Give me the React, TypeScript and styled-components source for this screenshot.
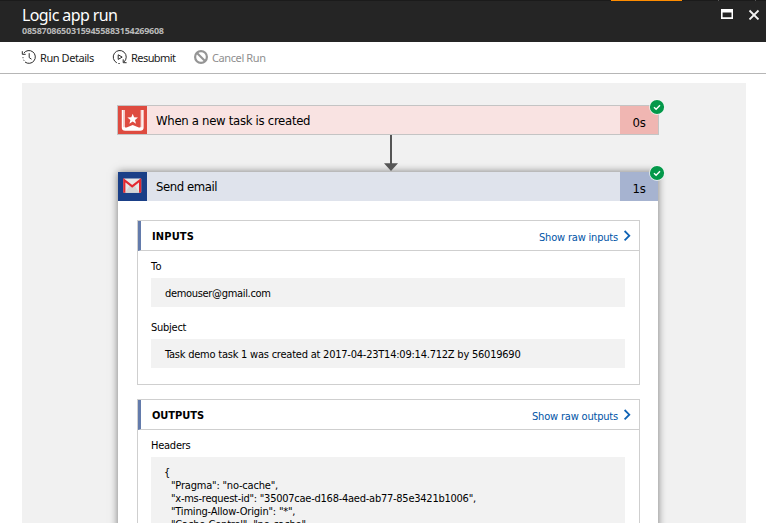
import React from 'react';
import styled, { createGlobalStyle } from 'styled-components';

const GlobalStyle = createGlobalStyle`
  * { box-sizing: border-box; }
  html, body { margin: 0; padding: 0; overflow: hidden; background: #fff; }
`;

const Blade = styled.div`
  display: flex;
  flex-direction: column;
  width: 766px;
  height: 523px;
  overflow: hidden;
  background: #fff;
  color: #000;
  font-family: 'DejaVu Sans Condensed', 'DejaVu Sans', sans-serif;
`;

const TopStrip = styled.div`
  display: flex;
  flex: none;
  height: 1px;
  background: #1b1b1b;
`;

const StripMark = styled.i<{ $gap: number; $width: number; $color: string }>`
  margin-left: ${(p) => p.$gap}px;
  width: ${(p) => p.$width}px;
  background: ${(p) => p.$color};
`;

const TitleBar = styled.header`
  display: flex;
  justify-content: space-between;
  flex: none;
  height: 41px;
  padding: 0 6px 0 22px;
  background: #252525;
  font-family: 'Noto Sans', sans-serif;
`;

const Titles = styled.div`
  display: flex;
  flex-direction: column;
  padding-top: 3px;
`;

const Title = styled.h1`
  margin: 0;
  color: #fff;
  font-size: 16px;
  font-weight: 400;
  line-height: 22px;
  letter-spacing: -0.6px;
  white-space: nowrap;
`;

const RunId = styled.span`
  color: #b9b9b9;
  font-size: 9px;
  font-weight: 700;
  line-height: 10px;
  letter-spacing: -0.26px;
`;

const WindowButtons = styled.div`
  display: flex;
  gap: 15px;
  padding-top: 7px;
`;

const Commands = styled.nav`
  display: flex;
  flex: none;
  align-items: flex-start;
  height: 32px;
  padding: 7px 0 0 21px;
  border-bottom: 1px solid #b6b6b6;
  font-family: 'Noto Sans', sans-serif;
`;

const Command = styled.button<{ $width: number; $tracking: number; $disabled?: boolean }>`
  display: flex;
  gap: 3px;
  width: ${(p) => p.$width}px;
  margin: 0;
  padding: 0;
  border: 0;
  background: none;
  color: ${(p) => (p.$disabled ? '#8f8f8f' : '#1c1c1c')};
  font: inherit;
  font-size: 11px;
  line-height: 18px;
  letter-spacing: ${(p) => p.$tracking}px;
  text-align: left;
  white-space: nowrap;
  svg { flex: none; }
`;

const Canvas = styled.main`
  display: flex;
  flex-direction: column;
  flex: 1;
  min-height: 0;
  margin: 9px 20px 0 22px;
  padding: 22px 87px 0 95px;
  background: #f1f1f1;
`;

const TriggerCard = styled.section`
  flex: none;
  width: 542px;
  border: 1px solid #c4c4c4;
`;

const ActionCard = styled.section`
  flex: none;
  width: 540px;
  height: 400px;
  margin-left: 1px;
  background: #fff;
  box-shadow: 0 0 8px rgba(0, 0, 0, 0.5);
`;

const CardHeader = styled.div<{ $bg: string; $height: number }>`
  position: relative;
  display: flex;
  height: ${(p) => p.$height}px;
  background: ${(p) => p.$bg};
`;

const CardIcon = styled.div<{ $bg: string }>`
  width: 29px;
  background: ${(p) => p.$bg};
  svg { display: block; }
`;

const CardTitle = styled.div<{ $tracking: number }>`
  flex: 1;
  padding-left: 9px;
  font-size: 13px;
  line-height: 30px;
  letter-spacing: ${(p) => p.$tracking}px;
`;

const Duration = styled.div<{ $bg: string }>`
  width: 38px;
  background: ${(p) => p.$bg};
  font-size: 13px;
  line-height: 34px;
  letter-spacing: -0.2px;
  text-align: center;
`;

const StatusBadge = styled.svg`
  position: absolute;
  right: -7px;
  top: -7px;
`;

const Connector = styled.svg`
  display: block;
  flex: none;
  position: relative;
  z-index: 1;
  margin-left: 266px;
`;

const CardBody = styled.div`
  display: flex;
  flex-direction: column;
  gap: 14px;
  padding: 19px 18px 0 19px;
`;

const Panel = styled.section<{ $height: number }>`
  height: ${(p) => p.$height}px;
  border: 1px solid #cfcfcf;
`;

const PanelHeader = styled.div`
  display: flex;
  justify-content: space-between;
  height: 30px;
  padding: 0 8px 0 11px;
  border-bottom: 1px solid #cfcfcf;
  border-left: 3px solid #637bab;
`;

const PanelTitle = styled.h2<{ $tracking: number }>`
  margin: 0;
  font-size: 11px;
  font-weight: 700;
  line-height: 32px;
  letter-spacing: ${(p) => p.$tracking}px;
`;

const RawLink = styled.a`
  display: flex;
  gap: 5px;
  color: #0054a6;
  font-size: 11px;
  line-height: 34px;
  letter-spacing: -0.19px;
  svg { margin-top: 9px; }
`;

const Fields = styled.div`
  display: flex;
  flex-direction: column;
  gap: 14px;
  padding: 9px 14px 0 13px;
`;

const Label = styled.div<{ $tracking?: number }>`
  height: 18px;
  font-size: 11px;
  line-height: 13px;
  letter-spacing: ${(p) => p.$tracking ?? -0.25}px;
`;

const Value = styled.div<{ $tracking: number }>`
  height: 29px;
  padding-left: 14px;
  background: #f2f2f2;
  font-size: 11px;
  line-height: 32px;
  letter-spacing: ${(p) => p.$tracking}px;
  white-space: nowrap;
`;

const Code = styled.pre`
  height: 140px;
  margin: 0;
  padding: 9px 0 0 13px;
  background: #f2f2f2;
  font-family: inherit;
  font-size: 11px;
  line-height: 13px;
`;

const CodeLine = styled.div<{ $indent?: boolean; $tracking?: number }>`
  height: 13px;
  padding-left: ${(p) => (p.$indent ? 7 : 0)}px;
  letter-spacing: ${(p) => p.$tracking ?? -0.2}px;
`;

const MaximizeIcon = () => (
  <svg width="13" height="12" viewBox="0 0 13 12">
    <path fill="#fff" fillRule="evenodd" d="M1 1h12v10H1zM2.6 4.6v4.7h8.9V4.6z" />
  </svg>
);

const CloseIcon = () => (
  <svg width="12" height="12" viewBox="0 0 12 12">
    <path d="M1.5 2.5l9 9M10.5 2.5l-9 9" stroke="#f4f4f4" strokeWidth="1.8" fill="none" />
  </svg>
);

const HistoryIcon = () => (
  <svg width="16" height="16" viewBox="0 0 16 16" fill="none" stroke="#2c2c2c" strokeWidth="1">
    <path d="M2.8 4.1A6.4 6.4 0 1 1 4 13" />
    <path d="M1.3 2.2v3.1h3.4M8.2 4.2v4.4l2.3 1.6" />
    <path d="M2 8.2v1M2.6 10.8l.5.9" />
  </svg>
);

const ResubmitIcon = () => (
  <svg width="16" height="16" viewBox="0 0 16 16" fill="none" stroke="#2c2c2c" strokeWidth="1">
    <path d="M4.8 13.8A6.5 6.5 0 1 1 11.9 13" />
    <path d="M14.6 13.7h-3.4v-3.4M6.2 5.8v4.6l4-2.3z" />
    <path d="M6.4 14.5h1.3" />
  </svg>
);

const CancelIcon = () => (
  <svg width="16" height="16" viewBox="0 0 16 16" fill="none" stroke="#959595" strokeWidth="2.2">
    <circle cx="8" cy="8" r="5.9" />
    <path d="M4 4l8 8" />
  </svg>
);

const WunderlistIcon = () => (
  <svg width="29" height="28" viewBox="0 0 29 28">
    <path
      fill="#fff"
      d="M3.8 4h2.9v16.3c0 1.2.8 1.6 1.9 1.1l6.1-2.3 6.1 2.3c1.1.5 1.9.1 1.9-1.1V4h2.9v17.7c0 2-1.2 3-3.3 3H7.1c-2.1 0-3.3-1-3.3-3z"
    />
    <path d="M5.6 4v17.2" stroke="#eda69f" strokeWidth=".6" />
    <path d="M23.8 4v17.2" stroke="#eda69f" strokeWidth=".6" />
    <path
      fill="#fff"
      d="M14.7 7.7l1.4 3.6 3.9.2-3 2.5 1 3.7-3.3-2.1-3.3 2.1 1-3.7-3-2.5 3.9-.2z"
    />
  </svg>
);

const GmailIcon = () => (
  <svg width="29" height="29" viewBox="0 0 29 29">
    <rect x="5.2" y="6.6" width="18" height="14.2" rx="1" fill="#e7e7e7" />
    <path d="M7 20.8l4.7-7 2.5 1.8 2.5-1.8 4.7 7z" fill="#d5d5d5" />
    <path d="M6.3 20.8V8.2l7.9 6.2 7.9-6.2v12.6" fill="none" stroke="#e32a31" strokeWidth="2.2" />
  </svg>
);

const SuccessBadge = () => (
  <StatusBadge width="16" height="16" viewBox="0 0 16 16">
    <circle cx="8" cy="8" r="7.8" fill="#f4faf6" />
    <circle cx="8" cy="8" r="7.1" fill="#04984a" />
    <path d="M5 8.3l2.1 2 3.9-4" fill="none" stroke="#fff" strokeWidth="1.4" />
  </StatusBadge>
);

const Chevron = () => (
  <svg width="8" height="12" viewBox="0 0 8 12">
    <path d="M1.6 1L6.3 5.7l-4.7 4.7" fill="none" stroke="#0f63b5" strokeWidth="1.8" />
  </svg>
);

const headerLines = [
  { text: '{' },
  { text: '"Pragma": "no-cache",', indent: true },
  { text: '"x-ms-request-id": "35007cae-d168-4aed-ab77-85e3421b1006",', indent: true, tracking: -0.25 },
  { text: '"Timing-Allow-Origin": "*",', indent: true },
  { text: '"Cache-Control": "no-cache",', indent: true },
];

export default function App() {
  return (
    <>
      <GlobalStyle />
      <Blade>
        <TopStrip>
          <StripMark $gap={611} $width={71} $color="#ff8c00" />
          <StripMark $gap={36} $width={1} $color="#555" />
          <StripMark $gap={36} $width={1} $color="#555" />
        </TopStrip>
        <TitleBar>
          <Titles>
            <Title>Logic app run</Title>
            <RunId>08587086503159455883154269608</RunId>
          </Titles>
          <WindowButtons>
            <MaximizeIcon />
            <CloseIcon />
          </WindowButtons>
        </TitleBar>
        <Commands>
          <Command $width={91} $tracking={-0.44}><HistoryIcon />Run Details</Command>
          <Command $width={81} $tracking={-0.56}><ResubmitIcon />Resubmit</Command>
          <Command $width={90} $tracking={-0.4} $disabled><CancelIcon />Cancel Run</Command>
        </Commands>
        <Canvas>
          <TriggerCard>
            <CardHeader $bg="#f9e3e2" $height={28}>
              <CardIcon $bg="#de4b40"><WunderlistIcon /></CardIcon>
              <CardTitle $tracking={-0.3}>When a new task is created</CardTitle>
              <Duration $bg="#f0b6b2">0s</Duration>
              <SuccessBadge />
            </CardHeader>
          </TriggerCard>
          <Connector width="16" height="37" viewBox="0 0 16 37">
            <path d="M7 0h2v28.3h6L8 36 1 28.3h6z" fill="#555" />
          </Connector>
          <ActionCard>
            <CardHeader $bg="#dfe3ec" $height={29}>
              <CardIcon $bg="#1a3f87"><GmailIcon /></CardIcon>
              <CardTitle $tracking={-0.44}>Send email</CardTitle>
              <Duration $bg="#a6b3d0">1s</Duration>
              <SuccessBadge />
            </CardHeader>
            <CardBody>
              <Panel $height={165}>
                <PanelHeader>
                  <PanelTitle $tracking={0.15}>INPUTS</PanelTitle>
                  <RawLink>Show raw inputs<Chevron /></RawLink>
                </PanelHeader>
                <Fields>
                  <div>
                    <Label $tracking={0.3}>To</Label>
                    <Value $tracking={-0.32}>demouser@gmail.com</Value>
                  </div>
                  <div>
                    <Label>Subject</Label>
                    <Value $tracking={-0.226}>
                      Task demo task 1 was created at 2017-04-23T14:09:14.712Z by 56019690
                    </Value>
                  </div>
                </Fields>
              </Panel>
              <Panel $height={200}>
                <PanelHeader>
                  <PanelTitle $tracking={-0.06}>OUTPUTS</PanelTitle>
                  <RawLink>Show raw outputs<Chevron /></RawLink>
                </PanelHeader>
                <Fields>
                  <div>
                    <Label>Headers</Label>
                    <Code>
                      {headerLines.map((line) => (
                        <CodeLine key={line.text} $indent={line.indent} $tracking={line.tracking}>
                          {line.text}
                        </CodeLine>
                      ))}
                    </Code>
                  </div>
                </Fields>
              </Panel>
            </CardBody>
          </ActionCard>
        </Canvas>
      </Blade>
    </>
  );
}
